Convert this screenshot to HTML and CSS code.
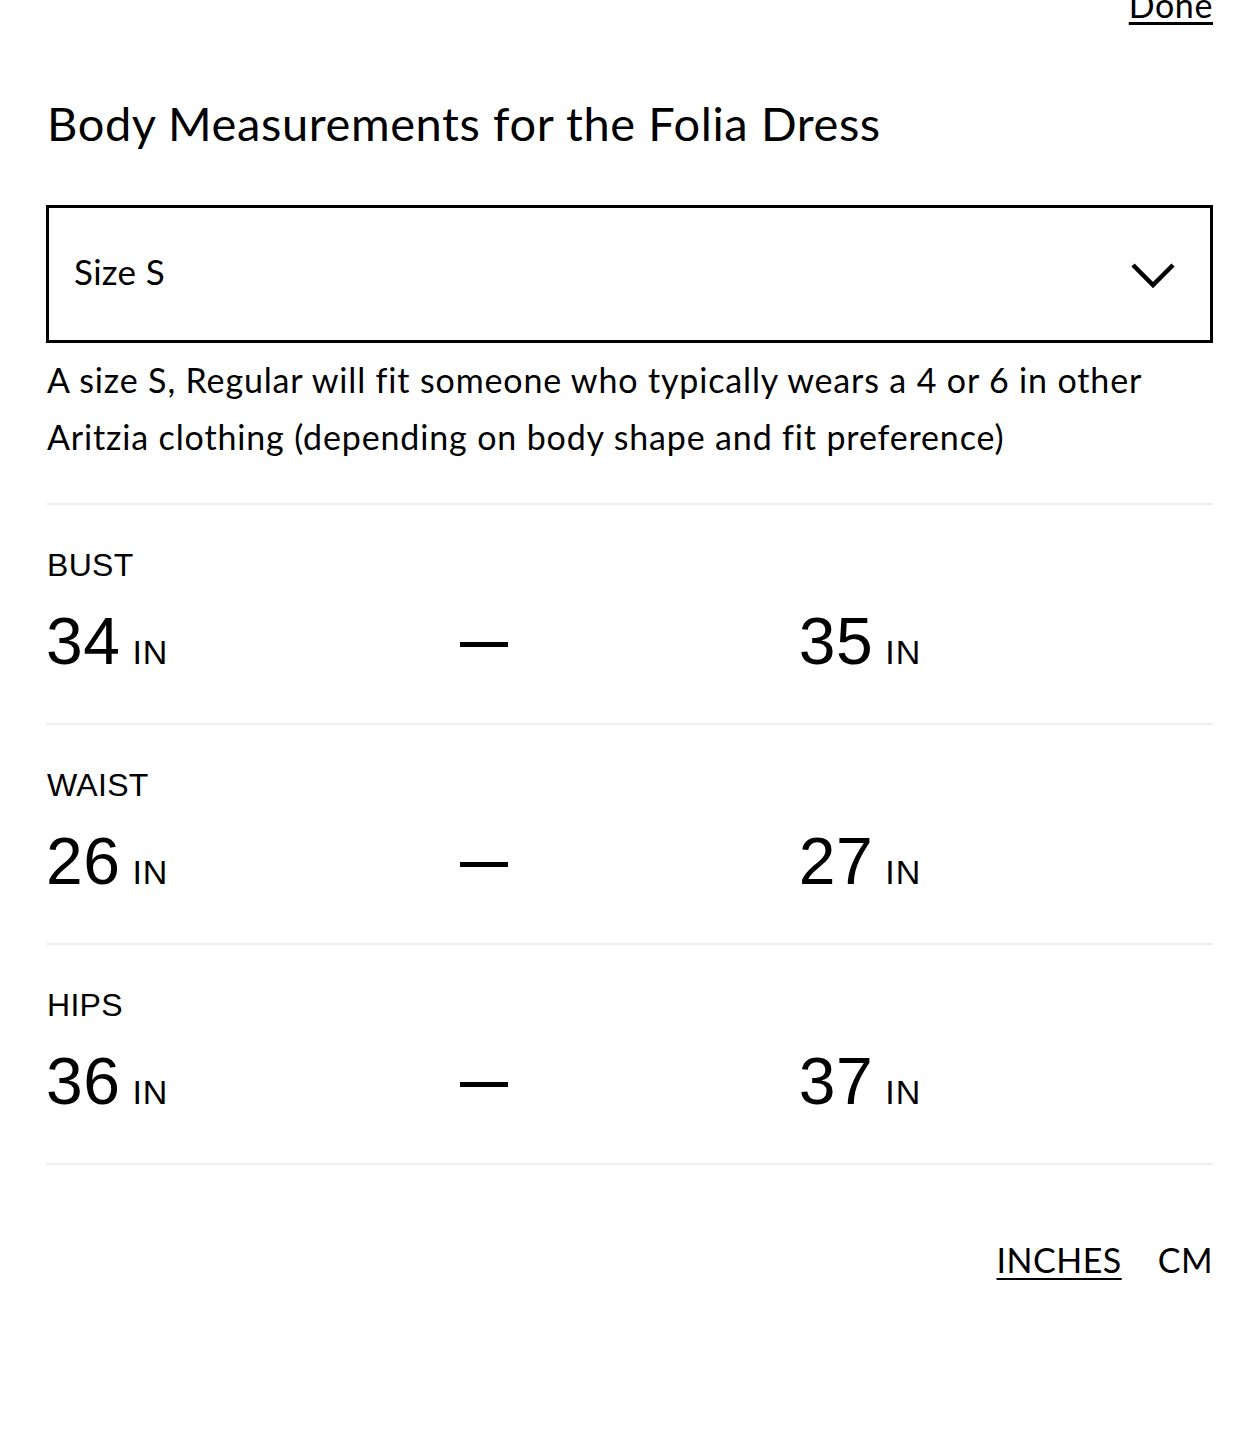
FILE: index.html
```html
<!DOCTYPE html>
<html lang="en">
<head>
<meta charset="utf-8">
<title>Body Measurements</title>
<link rel="stylesheet" href="styles.css">
</head>
<body>
<div class="page">
  <div class="top-bar"><a class="done" href="#">Done</a></div>
  <h1 class="title">Body Measurements for the Folia Dress</h1>
  <div class="select">
    <span class="select-label">Size S</span>
    <svg class="chevron" width="46" height="28" viewBox="0 0 46 28"><path d="M3 3 L23 23 L43 3" fill="none" stroke="#000" stroke-width="4.5"/></svg>
  </div>
  <p class="desc">A size S, Regular will fit someone who typically wears a 4 or 6 in other Aritzia clothing (depending on body shape and fit preference)</p>
  <div class="rows">
    <div class="row">
      <div class="label">BUST</div>
      <div class="values">
        <div class="val"><span class="num">34</span><span class="unit">IN</span></div>
        <div class="dash"></div>
        <div class="val"><span class="num">35</span><span class="unit">IN</span></div>
      </div>
    </div>
    <div class="row">
      <div class="label">WAIST</div>
      <div class="values">
        <div class="val"><span class="num">26</span><span class="unit">IN</span></div>
        <div class="dash"></div>
        <div class="val"><span class="num">27</span><span class="unit">IN</span></div>
      </div>
    </div>
    <div class="row">
      <div class="label">HIPS</div>
      <div class="values">
        <div class="val"><span class="num">36</span><span class="unit">IN</span></div>
        <div class="dash"></div>
        <div class="val"><span class="num">37</span><span class="unit">IN</span></div>
      </div>
    </div>
  </div>
  <div class="units">
    <a class="unit-btn active" href="#">INCHES</a>
    <a class="unit-btn" href="#">CM</a>
  </div>
</div>
</body>
</html>
```

FILE: styles.css
```css
html, body {
  margin: 0;
  padding: 0;
  background: #fff;
}
body {
  font-family: Lato, "Noto Sans", sans-serif;
  color: #000;
}
.page {
  padding: 0 46px 0 46px;
}
.top-bar {
  display: flex;
  justify-content: flex-end;
  height: 30px;
  overflow: visible;
}
.done {
  font-size: 34px;
  line-height: 34px;
  margin-top: -12px;
  color: #000;
  letter-spacing: 0.6px;
  text-decoration: underline;
  text-decoration-thickness: 3px;
  text-underline-offset: 4px;
}
.title {
  font-size: 47px;
  font-weight: 400;
  margin: 65px 0 0 1px;
  line-height: 56px;
  letter-spacing: 0.6px;
}
.select {
  margin-top: 54px;
  height: 132px;
  border: 3px solid #000;
  display: flex;
  align-items: center;
  justify-content: space-between;
  padding: 0 34px 0 25px;
  box-sizing: content-box;
}
.select-label {
  font-size: 35px;
  letter-spacing: 0.3px;
  margin-bottom: 6px;
}
.chevron {
  display: block;
  margin-top: 4px;
}
.desc {
  font-size: 34px;
  line-height: 57px;
  margin: 8px 0 0 1px;
  padding-bottom: 38px;
  border-bottom: 2px solid #eee;
  letter-spacing: 0.85px;
}
.row {
  height: 220px;
  border-bottom: 2px solid #eee;
  padding-top: 40px;
  box-sizing: border-box;
}
.label {
  font-family: "Liberation Sans", Arial, sans-serif;
  font-size: 32px;
  line-height: 40px;
  margin-left: 1px;
  letter-spacing: 0.3px;
}
.values {
  width: 75%;
  display: flex;
  justify-content: space-between;
  align-items: center;
  margin-top: 20px;
}
.val {
  display: flex;
  align-items: baseline;
  font-family: "Liberation Sans", Arial, sans-serif;
}
.num {
  font-size: 66px;
  line-height: 72px;
  letter-spacing: 0.5px;
}
.unit {
  font-size: 34px;
  margin-left: 12px;
  letter-spacing: 1px;
}
.dash {
  width: 48px;
  height: 5px;
  background: #000;
  margin-top: 6px;
}
.units {
  display: flex;
  justify-content: flex-end;
  gap: 36px;
  margin-top: 74px;
}
.unit-btn {
  font-size: 34px;
  color: #000;
  letter-spacing: 0.5px;
  text-decoration: none;
}
.unit-btn.active {
  text-decoration: underline;
  text-decoration-thickness: 3px;
  text-underline-offset: 5px;
}
```
